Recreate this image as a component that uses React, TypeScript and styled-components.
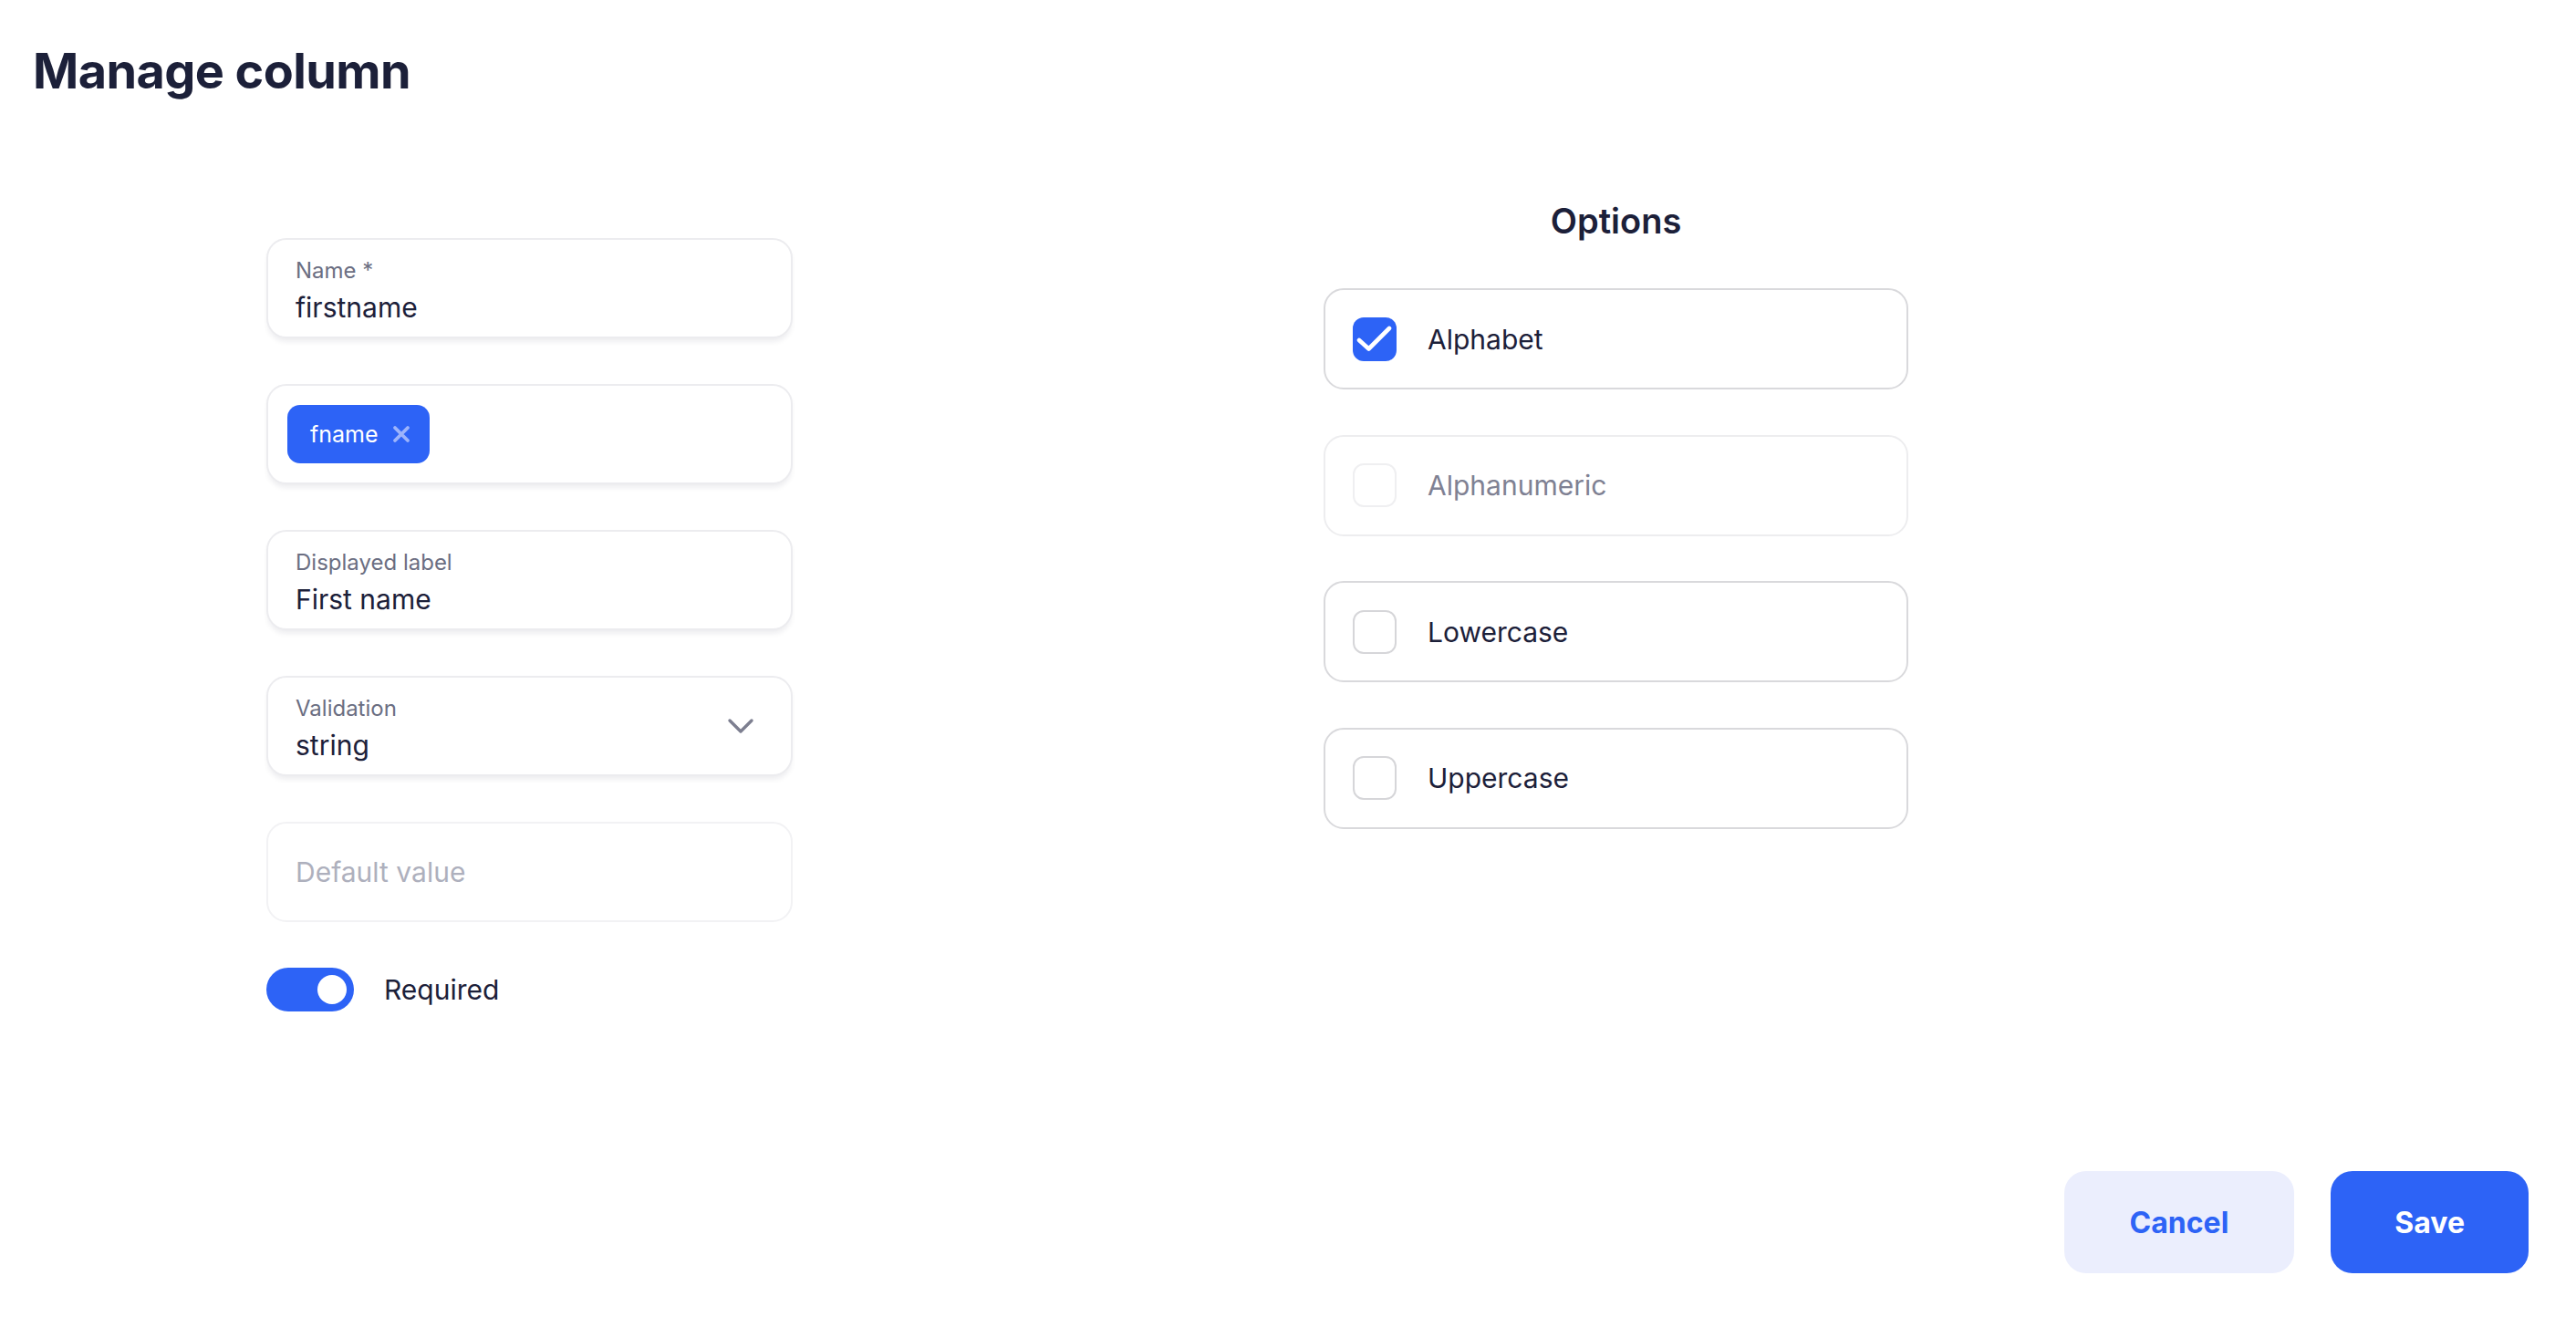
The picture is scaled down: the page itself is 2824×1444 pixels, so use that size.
import React, { useState } from 'react';
import styled, { createGlobalStyle } from 'styled-components';

const GlobalStyle = createGlobalStyle`
  html, body {
    margin: 0;
    padding: 0;
    background: #ffffff;
  }
  body {
    font-family: Inter, 'Noto Sans', 'Liberation Sans', sans-serif;
    color: #1c2039;
  }
  * {
    box-sizing: border-box;
  }
`;

const Page = styled.div`
  min-height: 100vh;
  display: flex;
  flex-direction: column;
  padding: 46px 52px 48px 36px;
`;

const Title = styled.h1`
  margin: 0;
  font-size: 54px;
  line-height: 64px;
  font-weight: 700;
  color: #1c2039;
  letter-spacing: -0.6px;
`;

const Content = styled.div`
  display: flex;
  align-items: flex-start;
  margin-top: 110px;
  padding-left: 256px;
  gap: 582px;
`;

const LeftColumn = styled.div`
  width: 577px;
  margin-top: 41px;
  display: flex;
  flex-direction: column;
  gap: 50px;
`;

const RightColumn = styled.div`
  width: 641px;
  display: flex;
  flex-direction: column;
`;

const Field = styled.div<{ $muted?: boolean }>`
  position: relative;
  height: 110px;
  padding: 20px 30px 0;
  border: 2px solid ${(p) => (p.$muted ? '#f2f2f4' : '#ececef')};
  border-radius: 22px;
  background: #fff;
  box-shadow: ${(p) => (p.$muted ? 'none' : '0 5px 6px -2px rgba(20, 24, 50, 0.09)')};
  display: flex;
  flex-direction: column;
`;

const CenteredField = styled(Field)`
  padding: 0 30px;
  justify-content: center;
`;

const TagField = styled(Field)`
  padding: 0 21px;
  flex-direction: row;
  align-items: center;
`;

const FieldLabel = styled.div`
  font-size: 24px;
  line-height: 28px;
  color: #6b6e82;
`;

const FieldValue = styled.div`
  margin-top: 8px;
  font-size: 30px;
  line-height: 36px;
  color: #1c2039;
`;

const Placeholder = styled.div`
  font-size: 30px;
  line-height: 36px;
  color: #aeb0bd;
`;

const Chevron = styled.svg`
  position: absolute;
  right: 40px;
  top: 50%;
  margin-top: -9px;
`;

const Chip = styled.div`
  height: 64px;
  display: inline-flex;
  align-items: center;
  gap: 15px;
  padding: 0 21px 0 25px;
  border-radius: 14px;
  background: #2d63f6;
  color: #fff;
  font-size: 25px;
`;

const ToggleRow = styled.div`
  display: flex;
  align-items: center;
  gap: 33px;
  font-size: 30px;
  color: #1c2039;
`;

const Toggle = styled.div<{ $on: boolean }>`
  width: 96px;
  height: 48px;
  border-radius: 24px;
  padding: 8px;
  background: ${(p) => (p.$on ? '#2d63f6' : '#d5d7e0')};
  display: flex;
  justify-content: ${(p) => (p.$on ? 'flex-end' : 'flex-start')};
  cursor: pointer;
`;

const Knob = styled.div`
  width: 32px;
  height: 32px;
  border-radius: 50%;
  background: #fff;
`;

const OptionsTitle = styled.h2`
  margin: 0 0 52px;
  text-align: center;
  font-size: 38px;
  line-height: 44px;
  font-weight: 600;
  color: #1c2039;
`;

const OptionList = styled.div`
  display: flex;
  flex-direction: column;
  gap: 49.5px;
`;

const OptionCard = styled.label<{ $disabled?: boolean }>`
  height: 111px;
  padding: 0 30px;
  display: flex;
  align-items: center;
  gap: 34px;
  border: 2px solid ${(p) => (p.$disabled ? '#ededef' : '#d9d9dc')};
  border-radius: 22px;
  background: #fff;
  font-size: 30px;
  color: ${(p) => (p.$disabled ? '#7f8193' : '#1c2039')};
  cursor: ${(p) => (p.$disabled ? 'default' : 'pointer')};
`;

const CheckBox = styled.span<{ $checked: boolean; $disabled?: boolean }>`
  width: 48px;
  height: 48px;
  flex: none;
  border-radius: 12px;
  display: flex;
  align-items: center;
  justify-content: center;
  background: ${(p) => (p.$checked ? '#2d63f6' : '#fff')};
  border: ${(p) => {
    if (p.$checked) return 'none';
    return p.$disabled ? '2px solid #efeff1' : '2px solid #d6d6d9';
  }};
`;

const Footer = styled.div`
  margin-top: auto;
  display: flex;
  justify-content: flex-end;
  gap: 40px;
`;

const Button = styled.button<{ $primary?: boolean }>`
  height: 112px;
  padding: 0 ${(p) => (p.$primary ? 70 : 72)}px;
  border: none;
  border-radius: 24px;
  font-family: Inter, 'Liberation Sans', sans-serif;
  font-size: 32px;
  font-weight: 700;
  background: ${(p) => (p.$primary ? '#2d63f6' : '#ebeefd')};
  color: ${(p) => (p.$primary ? '#ffffff' : '#2d63f6')};
  cursor: pointer;
`;

type Option = {
  label: string;
  disabled?: boolean;
};

const OPTIONS: Option[] = [
  { label: 'Alphabet' },
  { label: 'Alphanumeric', disabled: true },
  { label: 'Lowercase' },
  { label: 'Uppercase' },
];

const App: React.FC = () => {
  const [required, setRequired] = useState<boolean>(true);
  const [checked, setChecked] = useState<string[]>(['Alphabet']);

  const toggleOption = (opt: Option) => {
    if (opt.disabled) return;
    setChecked((prev) => (prev.includes(opt.label)
      ? prev.filter((l) => l !== opt.label)
      : [...prev, opt.label]));
  };

  return (
    <>
      <GlobalStyle />
      <Page>
        <Title>Manage column</Title>

        <Content>
          <LeftColumn>
            <Field>
              <FieldLabel>Name *</FieldLabel>
              <FieldValue>firstname</FieldValue>
            </Field>

            <TagField>
              <Chip>
                fname
                <svg width="20" height="20" viewBox="0 0 20 20">
                  <path d="M3 3 L17 17 M17 3 L3 17" stroke="#9db4fb" strokeWidth="3.8" strokeLinecap="round" />
                </svg>
              </Chip>
            </TagField>

            <Field>
              <FieldLabel>Displayed label</FieldLabel>
              <FieldValue>First name</FieldValue>
            </Field>

            <Field>
              <FieldLabel>Validation</FieldLabel>
              <FieldValue>string</FieldValue>
              <Chevron width="30" height="18" viewBox="0 0 30 18">
                <path d="M3 3 L15 15 L27 3" fill="none" stroke="#7d7f90" strokeWidth="3.4" strokeLinecap="round" strokeLinejoin="round" />
              </Chevron>
            </Field>

            <CenteredField $muted>
              <Placeholder>Default value</Placeholder>
            </CenteredField>

            <ToggleRow>
              <Toggle $on={required} onClick={() => setRequired(!required)}>
                <Knob />
              </Toggle>
              Required
            </ToggleRow>
          </LeftColumn>

          <RightColumn>
            <OptionsTitle>Options</OptionsTitle>
            <OptionList>
              {OPTIONS.map((opt) => {
                const isChecked = checked.includes(opt.label);
                return (
                  <OptionCard
                    key={opt.label}
                    $disabled={opt.disabled}
                    onClick={() => toggleOption(opt)}
                  >
                    <CheckBox $checked={isChecked} $disabled={opt.disabled}>
                      {isChecked && (
                        <svg width="48" height="48" viewBox="0 0 48 48">
                          <path d="M7 25 L17.5 34.5 L40 12" fill="none" stroke="#fff" strokeWidth="4.6" strokeLinecap="round" strokeLinejoin="round" />
                        </svg>
                      )}
                    </CheckBox>
                    {opt.label}
                  </OptionCard>
                );
              })}
            </OptionList>
          </RightColumn>
        </Content>

        <Footer>
          <Button type="button">Cancel</Button>
          <Button type="button" $primary>Save</Button>
        </Footer>
      </Page>
    </>
  );
};

export default App;
